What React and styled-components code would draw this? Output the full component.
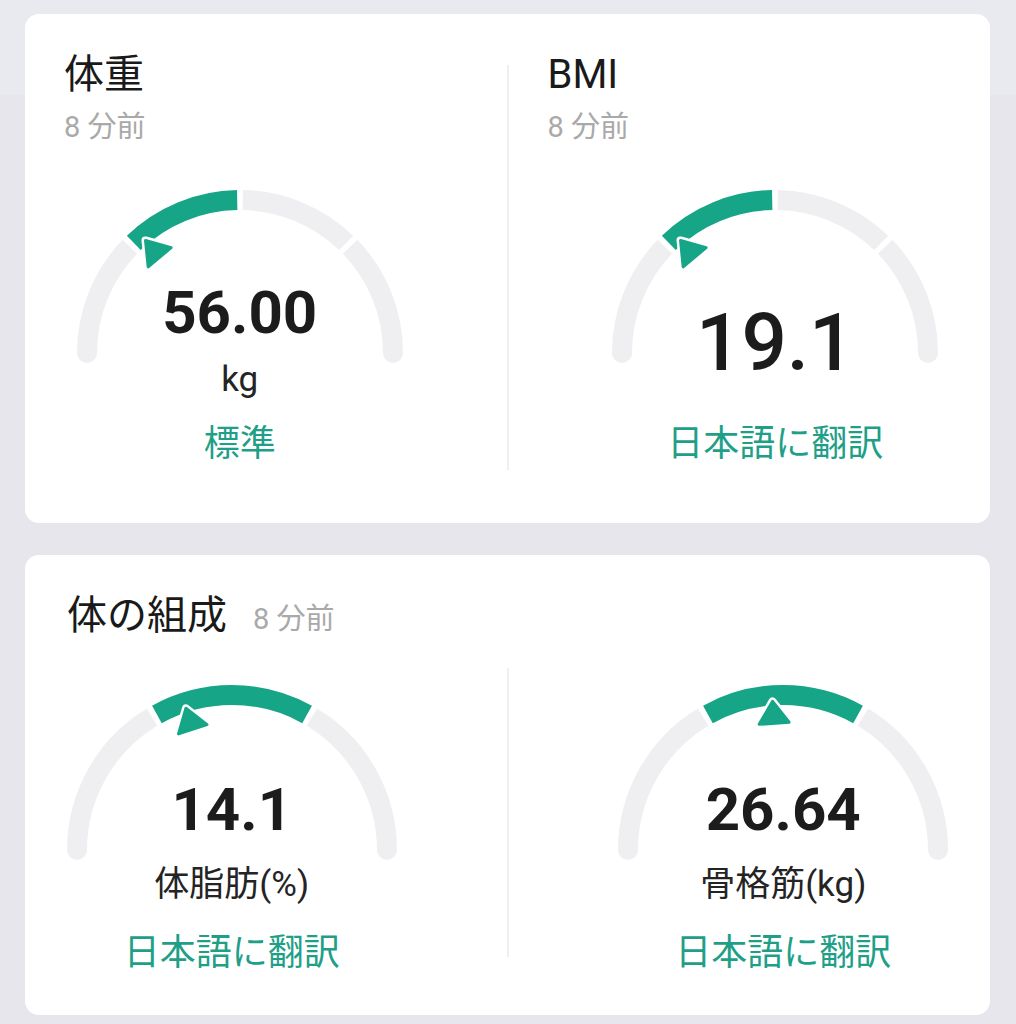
import React from "react";
import styled, { createGlobalStyle } from "styled-components";

const GREEN = "#17a587";
const TEAL = "#1f9f88";
const TRACK = "#efeff1";

const GlobalStyle = createGlobalStyle`
  html, body { margin: 0; padding: 0; }
  body {
    background: linear-gradient(#e9e9f0 0 95px, #e6e6ec 95px);
    font-family: Roboto, "Noto Sans CJK JP", sans-serif;
    color: #1b1b1b;
  }
`;

const Page = styled.main`
  display: flex;
  flex-direction: column;
  gap: 32px;
  padding: 14px 26px 9px 25px;
`;

const Card = styled.section`
  background: #ffffff;
  border-radius: 14px;
  padding: 37px 0 ${(p) => p.$pb}px;
`;

const Split = styled.div`
  display: grid;
  grid-template-columns: 1fr 2px 1fr;
  margin-top: ${(p) => p.$mt || 0}px;
`;

const Column = styled.div`
  display: flex;
  flex-direction: column;
  min-width: 0;
`;

const Divider = styled.div`
  align-self: start;
  background: #efefef;
  margin-top: ${(p) => p.$top}px;
  margin-bottom: ${(p) => p.$bottom || 0}px;
  height: ${(p) => p.$h}px;
`;

const Header = styled.div`
  display: flex;
  flex-direction: ${(p) => (p.$inline ? "row" : "column")};
  align-items: ${(p) => (p.$inline ? "baseline" : "flex-start")};
  padding-left: ${(p) => p.$pl}px;
`;

const Title = styled.h2`
  margin: 0;
  font-size: 40px;
  line-height: 48px;
  font-weight: 400;
  color: #1a1a1a;
`;

const Sub = styled.span`
  font-size: 29px;
  line-height: 36px;
  color: #a9a9a9;
  margin-top: ${(p) => (p.$inline ? 0 : 10)}px;
  margin-left: ${(p) => (p.$inline ? 26 : 0)}px;
`;

const GaugeArea = styled.div`
  display: grid;
  justify-items: center;
  margin-top: ${(p) => p.$mt}px;
  padding-left: ${(p) => (p.$side === "right" ? p.$inset : 0)}px;
  padding-right: ${(p) => (p.$side === "left" ? p.$inset : 0)}px;
  & > * {
    grid-area: 1 / 1;
  }
`;

const Dial = styled.svg`
  display: block;
  align-self: start;
`;

const Readout = styled.div`
  display: flex;
  flex-direction: column;
  align-items: center;
  padding-top: ${(p) => p.$pt}px;
`;

const Value = styled.div`
  font-size: ${(p) => p.$size}px;
  line-height: ${(p) => p.$lh}px;
  font-weight: ${(p) => p.$weight};
  color: #1c1c1c;
`;

const Unit = styled.div`
  font-size: 35px;
  line-height: 44px;
  color: #242424;
  margin-top: ${(p) => p.$mt}px;
`;

const Status = styled.div`
  font-size: 36px;
  line-height: 44px;
  color: ${TEAL};
  margin-top: ${(p) => p.$mt}px;
`;

function Gauge({ r, bounds, active, pointer }) {
  const W = 340;
  const cx = 170;
  const cy = r + 10;
  const H = r + 22;
  const rad = (d) => (d * Math.PI) / 180;
  const pt = (a, rr) => [cx + rr * Math.cos(rad(a)), cy - rr * Math.sin(rad(a))];
  const arc = (a0, a1) => {
    const [x0, y0] = pt(a0, r);
    const [x1, y1] = pt(a1, r);
    return `M${x0} ${y0}A${r} ${r} 0 0 1 ${x1} ${y1}`;
  };
  const g = ((2.8 / r) * 180) / Math.PI;
  const n = bounds.length - 1;
  const segs = [];
  for (let i = 0; i < n; i++) {
    const a0 = bounds[i] - (i > 0 ? g : 0);
    const a1 = bounds[i + 1] + (i < n - 1 ? g : 0);
    segs.push({ d: arc(a0, a1), on: i === active });
  }
  const [lx, ly] = pt(180, r);
  const [rx, ry] = pt(0, r);

  const u = [Math.cos(rad(pointer)), -Math.sin(rad(pointer))];
  const t = [Math.sin(rad(pointer)), Math.cos(rad(pointer))];
  const apex = [cx + u[0] * (r - 6), cy + u[1] * (r - 6)];
  const bc = [cx + u[0] * (r - 28), cy + u[1] * (r - 28)];
  const b1 = [bc[0] + t[0] * 15, bc[1] + t[1] * 15];
  const b2 = [bc[0] - t[0] * 15, bc[1] - t[1] * 15];
  const tri = `${apex[0]},${apex[1]} ${b1[0]},${b1[1]} ${b2[0]},${b2[1]}`;

  return (
    <Dial width={W} height={H} viewBox={`0 0 ${W} ${H}`}>
      <circle cx={lx} cy={ly} r={10} fill={TRACK} />
      <circle cx={rx} cy={ry} r={10} fill={TRACK} />
      {segs.map((s, i) => (
        <path key={i} d={s.d} fill="none" stroke={s.on ? GREEN : TRACK} strokeWidth={20} />
      ))}
      <polygon points={tri} fill="#fff" stroke="#fff" strokeWidth={8} strokeLinejoin="round" />
      <polygon points={tri} fill={GREEN} stroke={GREEN} strokeWidth={3} strokeLinejoin="round" />
    </Dial>
  );
}

function Meter({ side, inset, mt, gauge, pt, value, size, lh, weight, unit, unitGap, status, statusGap }) {
  return (
    <GaugeArea $side={side} $inset={inset} $mt={mt}>
      <Gauge {...gauge} />
      <Readout $pt={pt}>
        <Value $size={size} $lh={lh} $weight={weight}>
          {value}
        </Value>
        {unit && <Unit $mt={unitGap}>{unit}</Unit>}
        <Status $mt={statusGap}>{status}</Status>
      </Readout>
    </GaugeArea>
  );
}

export default function App() {
  return (
    <>
      <GlobalStyle />
      <Page>
        <Card $pb={57}>
          <Split>
            <Column>
              <Header $pl={39}>
                <Title>体重</Title>
                <Sub>8 分前</Sub>
              </Header>
              <Meter
                side="left"
                inset={52}
                mt={45}
                gauge={{ r: 153, bounds: [180, 135, 90, 45, 0], active: 1, pointer: 130 }}
                pt={88}
                value="56.00"
                size={60}
                lh={70}
                weight={700}
                unit="kg"
                unitGap={10}
                status="標準"
                statusGap={20}
              />
            </Column>
            <Divider $top={14} $h={405} $bottom={-4} />
            <Column>
              <Header $pl={39}>
                <Title>BMI</Title>
                <Sub>8 分前</Sub>
              </Header>
              <Meter
                side="right"
                inset={52}
                mt={45}
                gauge={{ r: 153, bounds: [180, 135, 90, 45, 0], active: 1, pointer: 130 }}
                pt={108}
                value="19.1"
                size={80}
                lh={90}
                weight={500}
                status="日本語に翻訳"
                statusGap={34}
              />
            </Column>
          </Split>
        </Card>

        <Card $pb={40}>
          <Header $inline $pl={42}>
            <Title>体の組成</Title>
            <Sub $inline>8 分前</Sub>
          </Header>
          <Split $mt={28}>
            <Column>
              <Meter
                side="left"
                inset={68}
                mt={17}
                gauge={{ r: 155, bounds: [180, 120, 60, 0], active: 1, pointer: 108 }}
                pt={90}
                value="14.1"
                size={60}
                lh={70}
                weight={700}
                unit="体脂肪(%)"
                unitGap={18}
                status="日本語に翻訳"
                statusGap={24}
              />
            </Column>
            <Divider $top={0} $h={289} />
            <Column>
              <Meter
                side="right"
                inset={68}
                mt={17}
                gauge={{ r: 155, bounds: [180, 120, 60, 0], active: 1, pointer: 94 }}
                pt={90}
                value="26.64"
                size={60}
                lh={70}
                weight={700}
                unit="骨格筋(kg)"
                unitGap={18}
                status="日本語に翻訳"
                statusGap={24}
              />
            </Column>
          </Split>
        </Card>
      </Page>
    </>
  );
}
